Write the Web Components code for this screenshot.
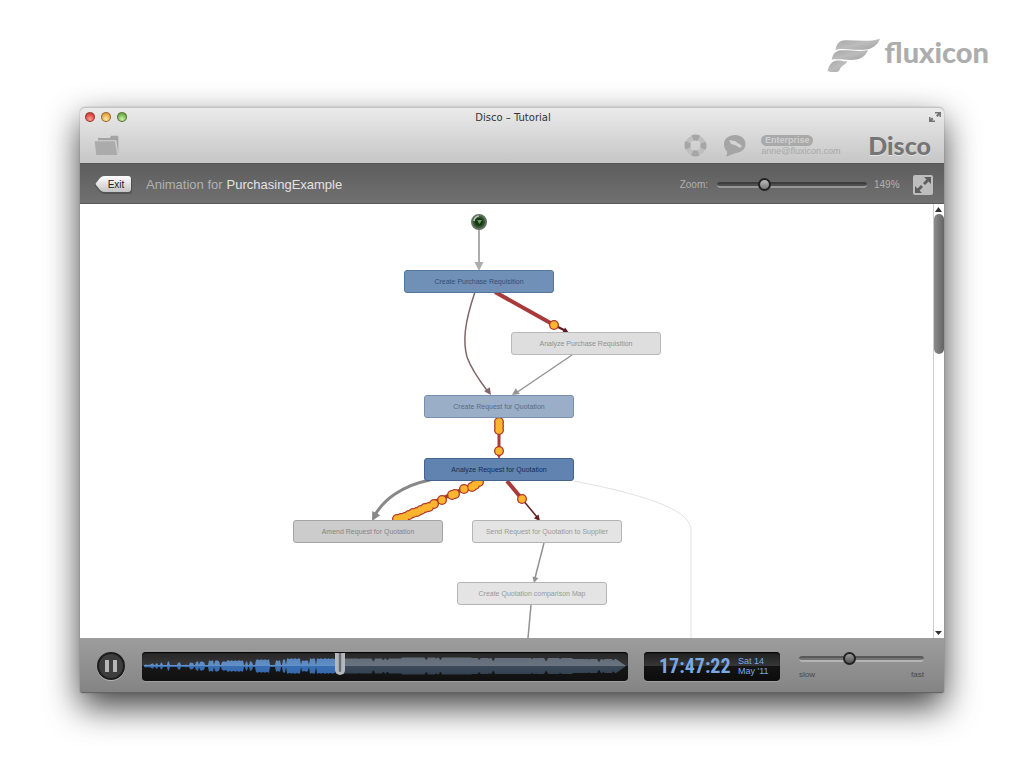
<!DOCTYPE html>
<html lang="en">
<head>
<meta charset="utf-8">
<meta name="viewport" content="width=device-width, initial-scale=1">
<title>Disco – Tutorial</title>
<style>
  html, body { margin: 0; height: 100%; }
  body {
    background: #fff;
    font-family: "Liberation Sans", Arial, sans-serif;
  }
</style>
</head>
<body>
<disco-page>
  <flux-brand slot="brand">fluxicon</flux-brand>
  <app-window>
    <window-header slot="header" email="anne@fluxicon.com" plan="Enterprise">Disco – Tutorial</window-header>
    <animation-bar slot="toolbar" zoom="149">PurchasingExample</animation-bar>
    <process-map></process-map>
    <playback-bar slot="footer" time="17:47:22"></playback-bar>
  </app-window>
</disco-page>

<script>
function define(name, html, setup) {
  const template = document.createElement('template');
  template.innerHTML = html;
  customElements.define(name, class extends HTMLElement {
    constructor() {
      super();
      this.attachShadow({ mode: 'open' });
      this.shadowRoot.appendChild(template.content.cloneNode(true));
    }

    connectedCallback() {
      if (setup) setup(this.shadowRoot, this);
    }
  });
}

const buttonReset = `
  button { border: 0; padding: 0; background: none; font: inherit; color: inherit; display: block; cursor: pointer; }
  svg { display: block; }
`;

define('disco-page', `
  <style>
    :host {
      display: flex;
      flex-direction: column;
      box-sizing: border-box;
      min-height: 100vh;
      padding: 36px 80px 75px;
    }
    .brand { display: flex; justify-content: flex-end; height: 71px; margin-right: -45px; }
    ::slotted(app-window) { flex: 1; }
  </style>
  <div class="brand"><slot name="brand"></slot></div>
  <slot></slot>
`);

define('flux-brand', `
  <style>
    :host { display: flex; gap: 4px; color: #adadad; font: 900 29px/32px Lato, sans-serif; }
    svg { margin-top: 2px; }
  </style>
  <svg width="54" height="35" viewBox="78 54 162 105" aria-hidden="true">
    <defs>
      <linearGradient id="g" x1="0" x2="1" y1="0" y2="1">
        <stop offset="0" stop-color="#a5a5a5"/><stop offset=".5" stop-color="#bcbcbc"/><stop offset="1" stop-color="#9f9f9f"/>
      </linearGradient>
    </defs>
    <g fill="url(#g)">
      <path d="M103 91C108 70 115 62 132 61C165 60 205 67 237 56C232 70 222 80 207 86C190 92 150 88 125 87C115 87 108 88 103 91Z"/>
      <path d="M92 120C96 101 103 93 120 91C150 90 175 96 201 90C195 105 185 113 170 118C150 122 125 118 110 118C100 118 95 118 92 120Z"/>
      <path d="M80 152C84 135 92 124 104 122C120 120 130 126 139 123C137 132 124 134 118 145C115 150 113 154 110 155C95 157 83 156 80 152Z"/>
    </g>
  </svg>
  <slot></slot>
`);

define('app-window', `
  <style>
    :host {
      display: flex;
      flex-direction: column;
      border-radius: 5px 5px 2px 2px;
      background: #fff;
      box-shadow: 0 0 1px rgba(0,0,0,.6), 0 14px 34px rgba(0,0,0,.75);
    }
    ::slotted(process-map) { flex: 1; }
  </style>
  <slot name="header"></slot>
  <slot name="toolbar"></slot>
  <slot></slot>
  <slot name="footer"></slot>
`);

define('window-header', `
  <style>
    ${buttonReset}
    :host {
      display: block;
      height: 56px;
      border-radius: 5px 5px 0 0;
      background: linear-gradient(#ebebeb, #c6c6c6);
      box-shadow: inset 0 1px #c4c4c4;
    }
    .title {
      display: grid;
      grid-template-columns: 1fr auto 1fr;
      align-items: center;
      height: 20px;
      padding: 0 3px 0 5px;
      font: 10px "DejaVu Sans", sans-serif;
      color: #333;
    }
    .lights { display: flex; gap: 6px; }
    .lights button { box-sizing: border-box; width: 10px; height: 10px; border-radius: 50%; border: 1px solid rgba(70,40,20,.55); }
    .close { background: radial-gradient(circle at 50% 75%, #ff9c92, #d8423e 70%); }
    .min { background: radial-gradient(circle at 50% 75%, #ffe9a0, #e5a343 70%); }
    .max { background: radial-gradient(circle at 50% 75%, #cdf3a5, #6aae48 70%); }
    .full { justify-self: end; }
    .tools { display: flex; align-items: center; height: 36px; padding: 0 13px 0 14px; color: #adadad; }
    .folder { margin-right: auto; }
    .help { margin-right: 16px; }
    .talk { margin-right: 15px; }
    .account { width: 76px; margin-right: 31px; font-size: 9px; line-height: 10px; color: #a8a8a8; }
    .plan {
      display: block;
      width: 52px;
      height: 11px;
      border-radius: 6px;
      background: #a9a9a9;
      color: #cfcfcf;
      font-weight: bold;
      text-align: center;
      line-height: 11px;
    }
    .name { color: #757575; font: 900 25px/24px Lato, sans-serif; text-shadow: 0 1px #e4e4e4; }
  </style>
  <div class="title">
    <div class="lights">
      <button class="close" aria-label="Close"></button>
      <button class="min" aria-label="Minimize"></button>
      <button class="max" aria-label="Zoom window"></button>
    </div>
    <slot></slot>
    <button class="full" aria-label="Full screen">
      <svg width="12" height="10" viewBox="0 0 12 10" fill="#747474">
        <path d="M6 0H12V5H10.500V3L8.500 5L7 3.500L9 1.500H6ZM0 5H1.500V7L3 5.500L4.500 7L3 8.500H6V10H0Z"/>
      </svg>
    </button>
  </div>
  <div class="tools">
    <button class="folder" aria-label="Open project">
      <svg width="25" height="21" viewBox="100 134 75 63">
        <path fill="#a3a3a3" d="M112 150V143H147L152 136H173V190L167 150Z"/>
        <path fill="#ababab" d="M102 153H163L170 194H107Z"/>
      </svg>
    </button>
    <button class="help" aria-label="Help">
      <svg width="23" height="23" viewBox="0 0 23 23" fill="none">
        <circle cx="11.500" cy="11.500" r="8" stroke="#bfbfbf" stroke-width="5"/>
        <circle cx="11.500" cy="11.500" r="8" stroke="#a6a6a6" stroke-width="6" stroke-dasharray="6.280 6.280" stroke-dashoffset="3.140"/>
      </svg>
    </button>
    <button class="talk" aria-label="Feedback">
      <svg width="23" height="23" viewBox="0 0 23 23">
        <path fill="#a5a5a5" d="M12 1C18 1 22.500 4.500 22.500 10C22.500 15 18.500 18.500 13 19C9 20 6 22 3 22.500C4 20.500 4.500 19 4 17.500C2 15.500 1 13 1 10C1 4.500 6 1 12 1Z"/>
        <path fill="#d4d4d4" d="M6 6L12 7L19 12L17 14L12 11L8 10Z"/>
      </svg>
    </button>
    <div class="account"><span class="plan"></span><span class="email"></span></div>
    <div class="name">Disco</div>
  </div>
`, (root, el) => {
  root.querySelector('.plan').textContent = el.getAttribute('plan');
  root.querySelector('.email').textContent = el.getAttribute('email');
});

// thin slider with a round knob, used for zoom and speed
define('knob-slider', `
  <style>
    :host { display: block; }
    input { display: block; appearance: none; width: 100%; height: 14px; margin: 0; background: none; }
    input::-webkit-slider-runnable-track {
      height: 6px;
      border-radius: 3px;
      background: var(--groove, #505050);
      box-shadow: inset 0 2px 1px rgba(0,0,0,.25), inset 0 -2px var(--edge, #989898);
    }
    input::-webkit-slider-thumb {
      appearance: none;
      box-sizing: border-box;
      width: 13px;
      height: 13px;
      margin-top: -4px;
      border: 2px solid #222;
      border-radius: 50%;
      background: var(--knob, linear-gradient(#bbb, #777));
    }
  </style>
  <input type="range" min="0" max="1000">
`, (root, el) => {
  const input = root.querySelector('input');
  input.value = el.getAttribute('value');
  input.setAttribute('aria-label', el.getAttribute('label'));
});

define('animation-bar', `
  <style>
    ${buttonReset}
    :host {
      display: flex;
      align-items: center;
      box-sizing: border-box;
      height: 41px;
      padding: 2px 11px 0 14px;
      border-top: 1px solid #555;
      border-bottom: 1px solid #585858;
      background: linear-gradient(#5e5e5e, #707070);
      color: #b0b0b0;
      font-size: 13px;
    }
    .exit { display: grid; margin-right: 14px; color: #222; font-size: 10px; }
    .exit > * { grid-area: 1 / 1; }
    .exit span { padding-left: 6px; line-height: 19px; }
    .what { margin-right: 4px; }
    .which { color: #e2e2e2; margin-right: auto; }
    .zoom { font-size: 10px; }
    knob-slider { width: 150px; margin: 0 7px 0 9px; }
    .percent { width: 39px; }
  </style>
  <button class="exit">
    <svg width="38" height="19" viewBox="0 0 38 19">
      <defs><linearGradient id="b" x2="0" y2="1"><stop stop-color="#fff"/><stop offset="1" stop-color="#c4c4c4"/></linearGradient></defs>
      <path fill="#444" opacity=".6" d="M10 2H35Q38 2 38 5V16Q38 19 35 19H10Q8 19 6 17L1 11Q0 10 1 9L6 4Q8 2 10 2Z"/>
      <path fill="url(#b)" d="M10 1H34Q37 1 37 4V14Q37 17 34 17H10Q8 17 6 15L2 10Q1 9 2 8L6 3Q8 1 10 1Z"/>
    </svg>
    <span>Exit</span>
  </button>
  <span class="what">Animation for</span>
  <span class="which"><slot></slot></span>
  <span class="zoom">Zoom:</span>
  <knob-slider value="296" label="Zoom"></knob-slider>
  <span class="zoom percent"></span>
  <button aria-label="Fit to window">
    <svg width="20" height="20" viewBox="0 0 20 20">
      <rect width="20" height="20" rx="2" fill="#bdbdbd"/>
      <path fill="#5e5e5e" d="M11 2H18V9L15.500 6.500L12 10L10 8L13.500 4.500ZM2 11L4.500 13.500L8 10L10 12L6.500 15.500L9 18H2Z"/>
    </svg>
  </button>
`, (root, el) => {
  root.querySelector('.percent').textContent = el.getAttribute('zoom') + '%';
});

const activities = [
  { x: 324, y: 66, label: 'Create Purchase Requisition', fill: '#7090b8', line: '#53769f', ink: '#334f76' },
  { x: 431, y: 128, label: 'Analyze Purchase Requisition', fill: '#dedede', line: '#b9b9b9', ink: '#909090' },
  { x: 344, y: 191, label: 'Create Request for Quotation', fill: '#9aaec7', line: '#7890ad', ink: '#596b85' },
  { x: 344, y: 254, label: 'Analyze Request for Quotation', fill: '#6083b0', line: '#44648e', ink: '#142d55' },
  { x: 213, y: 316, label: 'Amend Request for Quotation', fill: '#cccccc', line: '#a4a4a4', ink: '#858585' },
  { x: 392, y: 316, label: 'Send Request for Quotation to Supplier', fill: '#e4e4e4', line: '#b4b4b4', ink: '#999999' },
  { x: 377, y: 378, label: 'Create Quotation comparison Map', fill: '#e4e4e4', line: '#b4b4b4', ink: '#999999' }
];

// head: tip x, tip y, direction in degrees, size
const edges = [
  { d: 'M611 434V326C611 303 550 288 494 277', color: '#e2e2e2', width: 1 },
  { d: 'M399 25V60', color: '#adadad', width: 2, head: [399, 67, 90, 9] },
  { d: 'M395 88C384 120 383 138 387 153C392 167 402 180 409 189', color: '#80666a', width: 1.5, head: [411, 191, 55, 7] },
  { d: 'M415 88L474 121', color: '#a83a3a', width: 4 },
  { d: 'M474 121L486 127', color: '#5e1a20', width: 2, head: [489, 129, 28, 6] },
  { d: 'M492 151L436 189', color: '#949494', width: 1.5, head: [432, 191, 146, 7] },
  { d: 'M419 214V250', color: '#a83a3a', width: 3, head: [419, 255, 90, 6] },
  { d: 'M350 276C320 282 303 297 295 311', color: '#888888', width: 3, head: [292, 317, 118, 9] },
  { d: 'M401 277L317 315', color: '#a83a3a', width: 4 },
  { d: 'M427 277L442 295', color: '#a83a3a', width: 4 },
  { d: 'M442 295L457 313', color: '#5e2020', width: 1.5, head: [460, 317, 51, 6] },
  { d: 'M464 339L455 374', color: '#929292', width: 1.5, head: [454, 379, 104, 6] },
  { d: 'M451 401L448 434', color: '#929292', width: 1.5 }
];

const cases = [
  [474, 121], [419, 218], [419, 222], [419, 226], [419, 247], [442, 295],
  [399, 278], [395, 281], [392, 283], [384, 285], [375, 290], [372, 291], [362, 296], [354, 300], [349, 303],
  [345, 304], [341, 306], [337, 308], [333, 309], [329, 311], [325, 313], [321, 314], [317, 315]
];

define('activity-node', `
  <style>
    :host {
      position: absolute;
      box-sizing: border-box;
      width: 150px;
      height: 23px;
      border: 1px solid;
      border-radius: 3px;
      text-align: center;
      font-size: 7px;
      line-height: 21px;
      white-space: nowrap;
    }
  </style>
  <slot></slot>
`);

define('process-map', `
  <style>
    ${buttonReset}
    :host { display: flex; min-height: 434px; background: #fff; }
    .view { flex: 1; display: flex; justify-content: center; overflow: hidden; }
    .stage { position: relative; flex: none; width: 853px; }
    .stage > svg { position: absolute; left: 0; top: 0; }
    .scroll { display: flex; flex-direction: column; justify-content: space-between; width: 10px; border-left: 1px solid #ccc; }
    .scroll button { width: 10px; height: 10px; }
    .thumb { flex: 0 0 140px; margin-bottom: auto; border-radius: 5px; background: linear-gradient(90deg, #8c8c8c, #646464); }
  </style>
  <div class="view">
    <div class="stage">
      <svg width="853" height="434" viewBox="0 0 853 434" fill="none">
        <g class="edges"></g>
        <g class="rims" fill="#b0382a"></g>
        <g class="dots" fill="#fbb52f"></g>
        <circle cx="399" cy="18" r="7" fill="#2f552c" stroke="#61705f" stroke-width="2"/>
        <path d="M394 17C394 14 397 12 399 12" stroke="#b9c9b5" stroke-width="1.5"/>
        <circle cx="399" cy="18" r="4" fill="#173815"/>
        <path d="M397 16H402L399.500 20Z" fill="#6f9b67"/>
      </svg>
    </div>
  </div>
  <div class="scroll">
    <button aria-label="Scroll up"><svg width="9" height="10" viewBox="0 0 9 10"><path fill="#333" d="M4.500 3L8 8H1Z"/></svg></button>
    <div class="thumb"></div>
    <button aria-label="Scroll down"><svg width="9" height="10" viewBox="0 0 9 10"><path fill="#333" d="M1 3H8L4.500 7Z"/></svg></button>
  </div>
`, root => {
  root.querySelector('.edges').innerHTML = edges.map(({ d, color, width, head }) => {
    let out = `<path d="${d}" stroke="${color}" stroke-width="${width}"/>`;
    if (head) {
      const [x, y, angle, s] = head;
      out += `<path d="M0 0L${-s} ${-s / 2}V${s / 2}Z" fill="${color}" transform="translate(${x} ${y}) rotate(${angle})"/>`;
    }
    return out;
  }).join('');

  // rims go below all dots so that neighbouring cases merge into one band
  const circles = r => cases.map(([x, y]) => `<circle cx="${x}" cy="${y}" r="${r}"/>`).join('');
  root.querySelector('.rims').innerHTML = circles(5);
  root.querySelector('.dots').innerHTML = circles(3.7);

  const stage = root.querySelector('.stage');
  activities.forEach(a => {
    const node = document.createElement('activity-node');
    node.textContent = a.label;
    node.style.cssText = `left:${a.x}px;top:${a.y}px;background:${a.fill};border-color:${a.line};color:${a.ink}`;
    stage.appendChild(node);
  });
});

// [start, end, amplitude] for the played part, in track pixels
const bursts = [
  [4, 7, 2], [9, 11, 3], [14, 15, 3], [19, 20, 4], [26, 27, 5], [36, 38, 4], [43, 44, 2], [48, 51, 4],
  [54, 56, 5], [58, 62, 5], [67, 71, 6], [73, 77, 6], [80, 84, 5], [85, 101, 6], [104, 105, 5], [108, 110, 5],
  [114, 127, 7], [134, 138, 6], [141, 143, 7], [145, 158, 8], [160, 166, 6], [168, 173, 8], [175, 193, 8]
];

function wavePath(from, to, amp) {
  const top = [], bottom = [];
  for (let x = from; x <= to; x++) {
    const a = amp(x);
    top.push(`${x} ${14 - a}`);
    bottom.unshift(`${x} ${14 + a}`);
  }
  return `M${top.concat(bottom).join('L')}Z`;
}

define('time-line', `
  <style>
    :host {
      display: grid;
      height: 29px;
      border-radius: 4px;
      overflow: hidden;
      background: linear-gradient(#252525, #383838 50%, #171717 50%, #101010);
      box-shadow: inset 0 1px 1px #000, 0 1px rgba(255,255,255,.2);
    }
    svg, input { grid-area: 1 / 1; }
    svg { display: block; width: 100%; height: 29px; }
    input { appearance: none; width: 100%; height: 29px; margin: 0; background: none; }
    input::-webkit-slider-runnable-track { height: 29px; }
    input::-webkit-slider-thumb {
      appearance: none;
      box-sizing: border-box;
      width: 10px;
      height: 22px;
      margin-top: 1px;
      border: 3px solid #b4b7bb;
      border-top: 0;
      border-radius: 0 0 5px 5px;
      background: linear-gradient(90deg, #a4a7ab 1px, #686d74 1px, #686d74 3px, #a4a7ab 3px);
    }
  </style>
  <svg viewBox="0 0 486 29" preserveAspectRatio="none">
    <defs>
      <linearGradient id="on" x2="0" y2="1"><stop stop-color="#5684bb"/><stop offset=".5" stop-color="#6390c6"/><stop offset=".5" stop-color="#3a70b4"/><stop offset="1" stop-color="#3568aa"/></linearGradient>
      <linearGradient id="off" x2="0" y2="1"><stop stop-color="#636d79"/><stop offset=".5" stop-color="#697480"/><stop offset=".5" stop-color="#3c4a5a"/><stop offset="1" stop-color="#334050"/></linearGradient>
    </defs>
    <path class="played" fill="url(#on)"/>
    <path class="rest" fill="url(#off)"/>
  </svg>
  <input type="range" min="0" max="1000" value="406" aria-label="Position">
`, root => {
  root.querySelector('.played').setAttribute('d', wavePath(2, 197, x => {
    const hit = bursts.find(b => x >= b[0] && x <= b[1]);
    return hit ? hit[2] - Math.abs(Math.sin(x * 2.3)) : 1;
  }));
  root.querySelector('.rest').setAttribute('d', wavePath(198, 484, x => {
    if (x > 474) return (484 - x) * 0.7;
    const swell = x < 260 ? 7.5 : x < 330 ? 8.5 : 8;
    const dip = Math.max(0, Math.sin(x * 1.31) + Math.sin(x * 0.47) + Math.sin(x * 0.113) - 1.2) * 2;
    return swell - (x > 430 ? 1 : 0) - dip;
  }));
});

define('lcd-clock', `
  <style>
    :host {
      display: flex;
      align-items: center;
      box-sizing: border-box;
      height: 29px;
      padding: 0 9px 0 15px;
      gap: 6px;
      border-radius: 4px;
      background: linear-gradient(#1e1e1e, #383838 50%, #141414 50%, #0c0c0c);
      box-shadow: inset 0 1px 1px #000, 0 1px rgba(255,255,255,.2);
      color: #78a9e4;
    }
    time { width: 73px; font: bold 20px/28px "Liberation Sans Narrow", "Roboto Condensed", "Liberation Sans", sans-serif; }
    .date { font-size: 9px; line-height: 10px; white-space: nowrap; }
  </style>
  <time><slot></slot></time>
  <div class="date">Sat 14<br>May '11</div>
`);

define('playback-bar', `
  <style>
    ${buttonReset}
    :host {
      display: flex;
      align-items: center;
      box-sizing: border-box;
      height: 55px;
      padding: 2px 20px 0 16px;
      border-bottom: 1px solid #666;
      border-radius: 0 0 2px 2px;
      background: linear-gradient(#9d9d9d, #848484);
    }
    .pause { margin-right: 16px; }
    time-line { flex: 1; margin-right: 16px; }
    lcd-clock { width: 136px; margin-right: 19px; }
    .speed { width: 125px; --groove: #757575; --edge: #b4b4b4; --knob: linear-gradient(#999, #555); }
    .ends { display: flex; justify-content: space-between; margin-top: 4px; font-size: 8px; line-height: 10px; color: #484848; }
  </style>
  <button class="pause" aria-label="Pause">
    <svg width="30" height="30" viewBox="0 0 30 30">
      <circle cx="15" cy="16" r="14" fill="#b5b5b5"/>
      <circle cx="15" cy="15" r="13" fill="#3d3d3d" stroke="#1c1c1c" stroke-width="2"/>
      <path fill="#b6b6b6" d="M9 9H13V21H9ZM17 9H21V21H17Z"/>
    </svg>
  </button>
  <time-line></time-line>
  <lcd-clock></lcd-clock>
  <div class="speed">
    <knob-slider value="397" label="Speed"></knob-slider>
    <div class="ends"><span>slow</span><span>fast</span></div>
  </div>
`, (root, el) => {
  root.querySelector('lcd-clock').textContent = el.getAttribute('time');
});
</script>
</body>
</html>
